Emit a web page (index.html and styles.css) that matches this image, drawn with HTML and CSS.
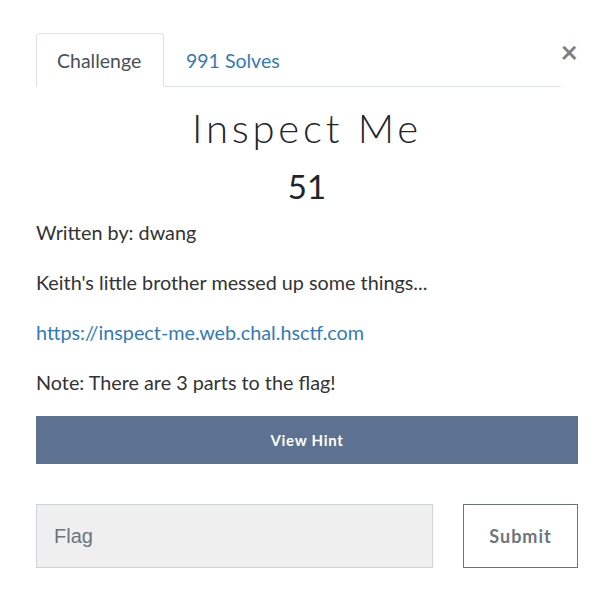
FILE: index.html
```html
<!DOCTYPE html>
<html lang="en">
<head>
<meta charset="utf-8">
<title>Inspect Me</title>
<link rel="stylesheet" href="styles.css">
</head>
<body>
<div class="modal">
  <div class="header">
    <ul class="tabs">
      <li class="tab active">Challenge</li>
      <li class="tab"><a href="#">991 Solves</a></li>
    </ul>
    <button class="close" type="button">×</button>
  </div>
  <h2 class="title">Inspect Me</h2>
  <h3 class="value">51</h3>
  <div class="desc">
    <p>Written by: dwang</p>
    <p>Keith's little brother messed up some things...</p>
    <p><a href="#">https://inspect-me.web.chal.hsctf.com</a></p>
    <p>Note: There are 3 parts to the flag!</p>
  </div>
  <button class="hint" type="button">View Hint</button>
  <form class="submit-row">
    <input class="flag" type="text" placeholder="Flag">
    <button class="submit" type="button">Submit</button>
  </form>
</div>
</body>
</html>
```

FILE: styles.css
```css
html, body {
  margin: 0;
  padding: 0;
  background: #fff;
}

body {
  font-family: "Lato", "Liberation Sans", sans-serif;
  color: #212529;
}

.modal {
  padding: 33px 34px 0 36px;
}

.header {
  display: flex;
  align-items: flex-start;
}

.tabs {
  list-style: none;
  margin: 0;
  padding: 0;
  width: 525px;
  display: flex;
  border-bottom: 1px solid #dee2e6;
}

.tab {
  height: 52px;
  line-height: 54px;
  padding: 0 21px;
  font-size: 19.5px;
  border: 1px solid transparent;
  border-radius: 4px 4px 0 0;
  margin-bottom: -1px;
  color: #495057;
}

.tab.active {
  border-color: #dee2e6 #dee2e6 #fff;
  background: #fff;
  width: 85px;
  padding: 0 21px 0 20px;
}

.tab a {
  color: #337ab7;
  text-decoration: none;
}

.close {
  margin-left: auto;
  margin-top: 3px;
  background: none;
  border: 0;
  padding: 0;
  font-family: "Lato", sans-serif;
  font-size: 30px;
  font-weight: 700;
  line-height: 30px;
  color: #000;
  opacity: 0.5;
}

.title {
  margin: 17px 0 0;
  text-align: center;
  font-size: 40px;
  line-height: 48px;
  font-weight: 300;
  letter-spacing: 3.8px;
}

.value {
  margin: 14px 0 0;
  text-align: center;
  font-size: 33px;
  line-height: 40px;
  font-weight: 400;
}

.desc {
  margin-top: 13px;
  color: #333;
}

.desc p {
  margin: 0 0 23px;
  font-size: 19.8px;
  line-height: 27px;
}

.desc p:last-child {
  margin-bottom: 20px;
}

.desc a {
  color: #337ab7;
  text-decoration: none;
}

.hint {
  display: block;
  width: 542px;
  height: 48px;
  border: 0;
  background: #5c7290;
  color: #fff;
  font-family: "Lato", sans-serif;
  font-size: 15px;
  font-weight: 700;
  letter-spacing: 0.7px;
  padding: 0;
}

.submit-row {
  display: flex;
  gap: 30px;
  margin-top: 40px;
  width: 542px;
}

.flag {
  box-sizing: border-box;
  width: 397px;
  height: 64px;
  background: #efefef;
  border: 1px solid #ced4da;
  padding: 0 17px;
  font-family: "Liberation Sans", Arial, sans-serif;
  font-size: 20px;
  color: #495057;
}

.flag::placeholder {
  color: #6c757d;
}

.submit {
  box-sizing: border-box;
  width: 115px;
  height: 64px;
  background: #fff;
  border: 1px solid #6c757d;
  color: #6c757d;
  font-family: "Lato", sans-serif;
  font-size: 18px;
  font-weight: 700;
  letter-spacing: 1px;
  padding: 0;
}
```
